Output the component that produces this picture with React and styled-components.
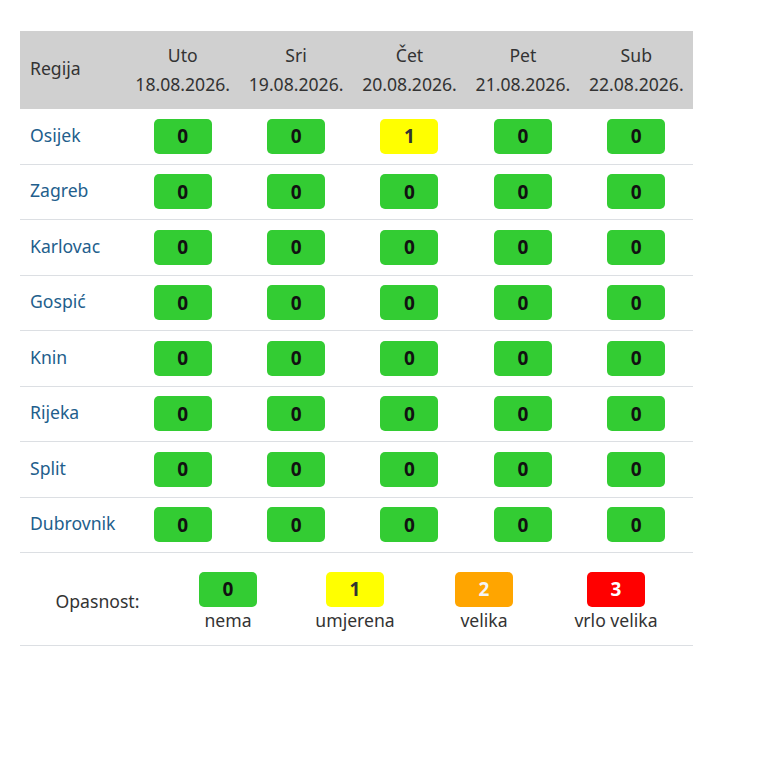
import React from "react";
import styled, { createGlobalStyle } from "styled-components";

const Global = createGlobalStyle`
  html, body { margin: 0; padding: 0; background: #fff; }
  body { font-family: "Noto Sans", "Open Sans", sans-serif; color: #333; }
`;

const Page = styled.div`
  padding: 31px 0 0 20px;
`;

const Table = styled.div`
  width: 673px;
`;

const Row = styled.div`
  display: grid;
  grid-template-columns: 106px repeat(5, 1fr);
  align-items: center;
  height: ${(p) => p.$h || "55.5px"};
  background: ${(p) => p.$bg || "transparent"};
  border-bottom: ${(p) => (p.$border ? "1px solid #dcdfe3" : "none")};
  box-sizing: border-box;
`;

const HeadCell = styled.div`
  font-size: 17.6px;
  line-height: 29px;
  color: #333;
  text-align: ${(p) => (p.$left ? "left" : "center")};
  padding-left: ${(p) => (p.$left ? "10px" : "0")};
  margin-top: ${(p) => (p.$left ? "-3px" : "0")};
  white-space: nowrap;
`;

const Region = styled.a`
  font-size: 17.6px;
  color: #225e8c;
  text-decoration: none;
  padding-left: 10px;
  margin-top: -3px;
`;

const Cell = styled.div`
  display: flex;
  justify-content: center;
`;

const colors = {
  0: { bg: "#33cc33", fg: "#111" },
  1: { bg: "#ffff00", fg: "#333" },
  2: { bg: "#ffa500", fg: "#f4f4f4" },
  3: { bg: "#ff0000", fg: "#fff" },
};

const Badge = styled.div`
  width: 58px;
  height: 35px;
  border-radius: 5px;
  background: ${(p) => colors[p.$level].bg};
  color: ${(p) => colors[p.$level].fg};
  font-weight: 700;
  font-size: 19px;
  display: flex;
  align-items: center;
  justify-content: center;
`;

const Legend = styled.div`
  display: grid;
  grid-template-columns: 155px 106px 148px 110px 154px;
  align-items: center;
  height: 93px;
  border-bottom: 1px solid #dcdfe3;
  box-sizing: border-box;
  padding-top: 4px;
`;

const LegendTitle = styled.div`
  font-size: 17.6px;
  text-align: center;
  color: #333;
`;

const LegendItem = styled.div`
  display: flex;
  flex-direction: column;
  align-items: center;
  gap: 2px;
`;

const LegendLabel = styled.div`
  font-size: 17.6px;
  line-height: 22px;
  color: #333;
`;

const days = [
  ["Uto", "18.08.2026."],
  ["Sri", "19.08.2026."],
  ["Čet", "20.08.2026."],
  ["Pet", "21.08.2026."],
  ["Sub", "22.08.2026."],
];

const regions = [
  ["Osijek", [0, 0, 1, 0, 0]],
  ["Zagreb", [0, 0, 0, 0, 0]],
  ["Karlovac", [0, 0, 0, 0, 0]],
  ["Gospić", [0, 0, 0, 0, 0]],
  ["Knin", [0, 0, 0, 0, 0]],
  ["Rijeka", [0, 0, 0, 0, 0]],
  ["Split", [0, 0, 0, 0, 0]],
  ["Dubrovnik", [0, 0, 0, 0, 0]],
];

const legend = [
  [0, "nema"],
  [1, "umjerena"],
  [2, "velika"],
  [3, "vrlo velika"],
];

export default function App() {
  return (
    <>
      <Global />
      <Page>
        <Table>
          <Row $h="78px" $bg="#d0d0d0">
            <HeadCell $left>Regija</HeadCell>
            {days.map(([d, date]) => (
              <HeadCell key={d}>
                {d}
                <br />
                {date}
              </HeadCell>
            ))}
          </Row>
          {regions.map(([name, vals]) => (
            <Row key={name} $border>
              <Region href="#">{name}</Region>
              {vals.map((v, i) => (
                <Cell key={i}>
                  <Badge $level={v}>{v}</Badge>
                </Cell>
              ))}
            </Row>
          ))}
          <Legend>
            <LegendTitle>Opasnost:</LegendTitle>
            {legend.map(([lvl, label]) => (
              <LegendItem key={lvl}>
                <Badge $level={lvl}>{lvl}</Badge>
                <LegendLabel>{label}</LegendLabel>
              </LegendItem>
            ))}
          </Legend>
        </Table>
      </Page>
    </>
  );
}
